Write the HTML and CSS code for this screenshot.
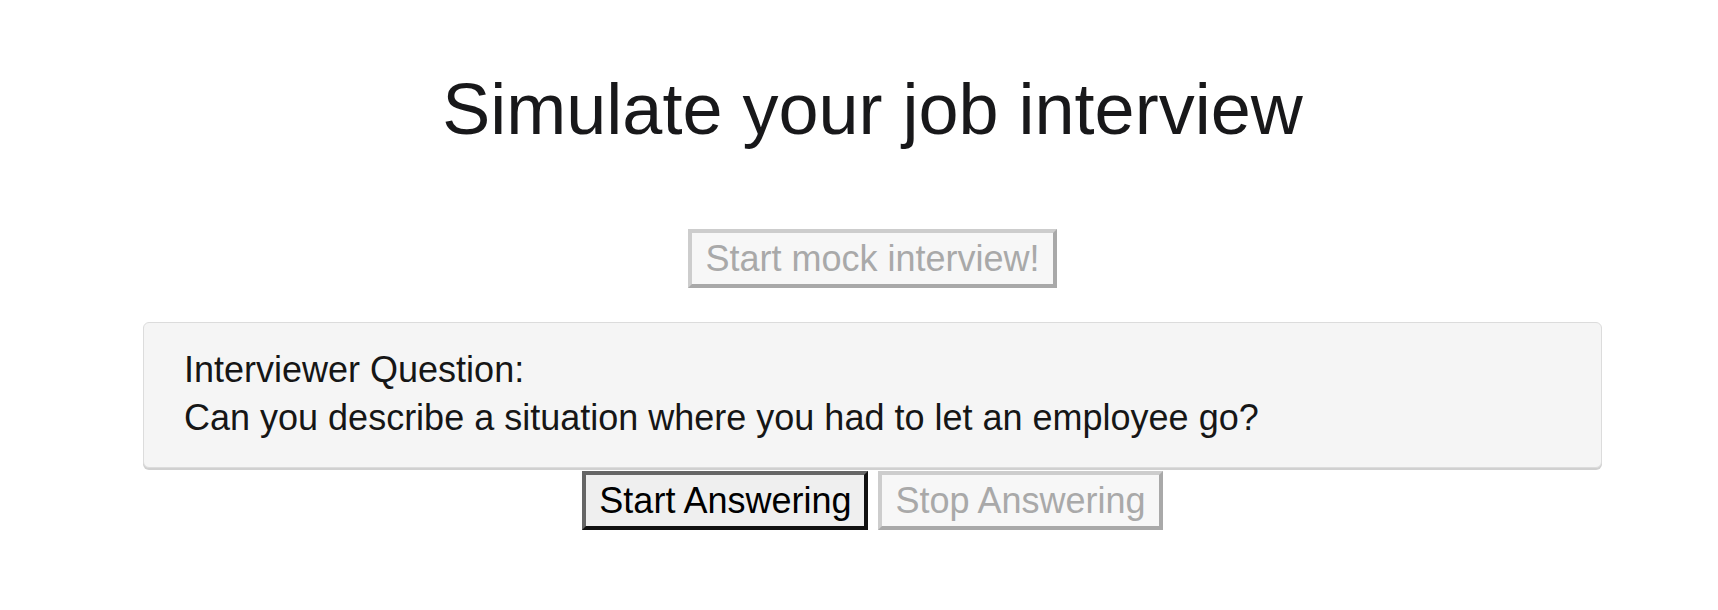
FILE: index.html
```html
<!DOCTYPE html>
<html lang="en">
<head>
    <meta charset="UTF-8">
    <title>Mock Interview</title>
    <link rel="stylesheet" href="styles.css">
</head>
<body>
<div class="page">
    <h1 class="title">Simulate your job interview</h1>
    <div class="start-row">
        <button class="btn" disabled>Start mock interview!</button>
    </div>
    <div class="question-box">
        <p>Interviewer Question:</p>
        <p>Can you describe a situation where you had to let an employee go?</p>
    </div>
    <div class="answer-row">
        <button class="btn active">Start Answering</button>
        <button class="btn" disabled>Stop Answering</button>
    </div>
</div>
</body>
</html>
```

FILE: styles.css
```css
* {
    margin: 0;
    padding: 0;
    box-sizing: border-box;
}
body {
    background-color: #fff;
    color: #161616;
    font-family: "Liberation Sans", Arial, sans-serif;
}
.page {
    margin: 0 116px 0 143px;
    padding-top: 68px;
}
.title {
    font-size: 72px;
    line-height: 82px;
    font-weight: normal;
    text-align: center;
    color: #18181a;
}
.start-row {
    display: flex;
    justify-content: center;
    margin-top: 79px;
}
.btn {
    font-family: "Liberation Sans", Arial, sans-serif;
    font-size: 36px;
    line-height: 41px;
    padding: 5px 13px;
    border: 4px solid;
    border-color: #cdcdcd #a9a9a9 #a9a9a9 #cdcdcd;
    background-color: #f7f7f7;
    color: #a9a9a9;
    border-radius: 0;
}
.btn.active {
    border-color: #666 #111 #111 #666;
    background-color: #efefef;
    color: #000;
    cursor: pointer;
}
.question-box {
    margin-top: 34px;
    padding: 23px 40px 25px;
    background-color: #f5f5f5;
    border: 1px solid #dcdcdc;
    border-radius: 6px;
    box-shadow: 0 2px 0 #d0d0d0;
    font-size: 36px;
    line-height: 48px;
    color: #161616;
}
.answer-row {
    display: flex;
    justify-content: center;
    gap: 10px;
    margin-top: 3px;
}
```
